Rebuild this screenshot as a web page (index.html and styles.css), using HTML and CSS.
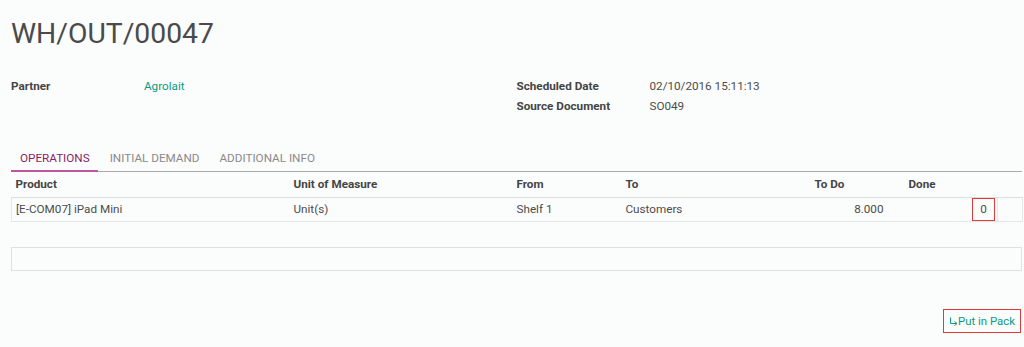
FILE: index.html
```html
<!DOCTYPE html>
<html>
<head>
<meta charset="utf-8">
<link rel="stylesheet" href="styles.css">
</head>
<body>
<div class="sheet">
  <h1 class="title">WH/OUT/00047</h1>
  <div class="info">
    <div class="group">
      <div class="field"><span class="label">Partner</span><span class="value link">Agrolait</span></div>
    </div>
    <div class="group">
      <div class="field"><span class="label">Scheduled Date</span><span class="value">02/10/2016 15:11:13</span></div>
      <div class="field"><span class="label">Source Document</span><span class="value">SO049</span></div>
    </div>
  </div>
  <div class="tabs">
    <div class="tab active">OPERATIONS</div>
    <div class="tab">INITIAL DEMAND</div>
    <div class="tab">ADDITIONAL INFO</div>
  </div>
  <table class="ops">
    <thead>
      <tr>
        <th class="c-product">Product</th>
        <th class="c-uom">Unit of Measure</th>
        <th class="c-from">From</th>
        <th class="c-to">To</th>
        <th class="c-todo">To Do</th>
        <th class="c-done">Done</th>
        <th class="c-del"></th>
      </tr>
    </thead>
    <tbody>
      <tr>
        <td>[E-COM07] iPad Mini</td>
        <td>Unit(s)</td>
        <td>Shelf 1</td>
        <td>Customers</td>
        <td class="num">8.000</td>
        <td class="done-cell"><span class="done-box">0</span></td>
        <td class="del"></td>
      </tr>
    </tbody>
  </table>
  <div class="empty-box"></div>
  <div class="actions">
    <span class="pack-btn"><svg class="pack-icon" width="9" height="10" viewBox="0 0 9 10"><path d="M1.5 1.5V7.5H7.5" fill="none" stroke="currentColor" stroke-width="1"/><path d="M5.5 5.5L8 7.5L5.5 9.5" fill="none" stroke="currentColor" stroke-width="1"/></svg>Put in Pack</span>
  </div>
</div>
</body>
</html>
```
FILE: styles.css
```css
* { box-sizing: border-box; }
html, body {
  margin: 0;
  padding: 0;
  background: #fbfcfc;
  font-family: Roboto, "Liberation Sans", sans-serif;
  color: #4c4c4c;
  font-size: 11.7px;
}
.sheet {
  padding: 14px 2px 0 11px;
}
.title {
  margin: 0;
  font-size: 28.3px;
  font-weight: 400;
  line-height: 40px;
  color: #4a4a4a;
}
.info {
  display: flex;
  margin-top: 22px;
}
.group {
  width: 506px;
}
.field {
  display: flex;
  height: 20px;
  align-items: center;
}
.label {
  width: 133px;
  font-weight: 700;
  color: #444;
}
.link { color: #0c9a84; }
.tabs {
  display: flex;
  margin-top: 30px;
  border-bottom: 1px solid #a9a9a9;
  height: 26px;
}
.tab {
  padding: 0 8px 0 9px;
  margin-right: 3px;
  line-height: 24px;
  color: #8a8a8a;
}
.tab.active {
  color: #8a1e64;
  border-bottom: 2px solid #c2569d;
  margin-bottom: -1px;
}
.ops {
  width: 1011px;
  border-collapse: collapse;
  table-layout: fixed;
}
.ops th {
  font-weight: 700;
  text-align: left;
  height: 25px;
  padding: 0 4px;
  color: #444;
  border-bottom: 1px solid #dedede;
}
.ops td {
  height: 23px;
  padding: 0 4px;
  border-bottom: 1px solid #e6e6e6;
}
.ops tbody tr td:first-child { border-left: 1px solid #e6e6e6; }
.ops tbody tr td:last-child { border-right: 1px solid #e6e6e6; }
.c-product { width: 278px; }
.c-uom { width: 223px; }
.c-from { width: 109px; }
.c-to { width: 189px; }
.c-todo { width: 77px; }
.c-done { width: 110px; }
.c-del { width: 25px; }
.num { text-align: right; }
.ops th.c-done { padding-left: 21px; }
.ops td.done-cell { text-align: right; padding: 0 2px 0 0; }
.done-box {
  display: inline-block;
  width: 23px;
  height: 23px;
  line-height: 21px;
  border: 1px solid #e4393c;
  text-align: center;
  vertical-align: middle;
}
.ops td.del { border-left: 1px solid #e6e6e6; }
.empty-box {
  margin-top: 25px;
  height: 24px;
  border: 1px solid #e0e0e0;
}
.actions {
  display: flex;
  justify-content: flex-end;
  margin-top: 38px;
}
.pack-btn {
  display: inline-flex;
  align-items: center;
  height: 24px;
  padding: 0 5px 0 5px;
  border: 1px solid #e4393c;
  color: #0c9a84;
  margin-right: 1px;
  font-size: 11.4px;
}
.pack-icon {
  margin-right: 0;
}
```
